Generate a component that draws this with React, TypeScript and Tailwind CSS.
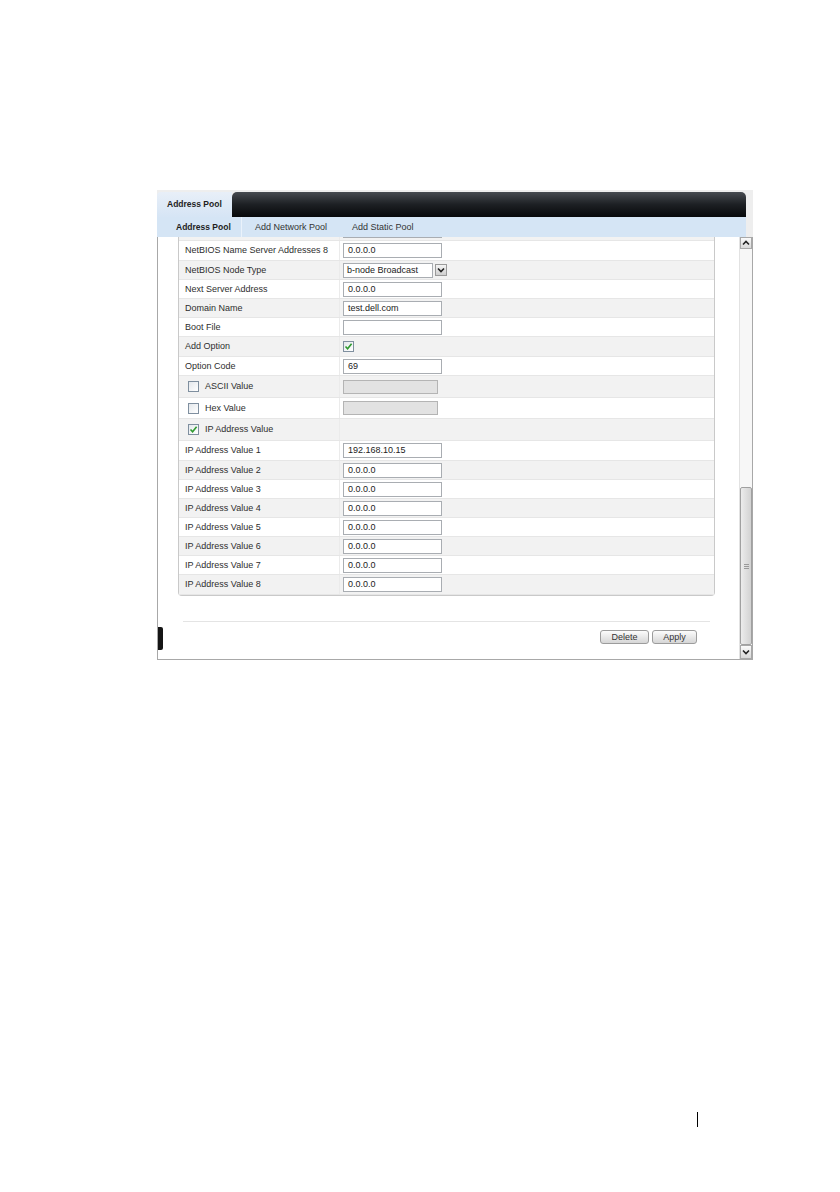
type Row = {
  label: string;
  h: string;
  kind: 'input' | 'select' | 'check' | 'checkLabel' | 'none';
  value?: string;
  checked?: boolean;
  disabledInput?: boolean;
};

// first row is scrolled almost out of view; only its input's bottom edge shows
const rows: Row[] = [
  { label: '', h: 'h-[20px]', kind: 'input', value: '' },
  { label: 'NetBIOS Name Server Addresses 8', h: 'h-[20px]', kind: 'input', value: '0.0.0.0' },
  { label: 'NetBIOS Node Type', h: 'h-[19px]', kind: 'select', value: 'b-node Broadcast' },
  { label: 'Next Server Address', h: 'h-[19px]', kind: 'input', value: '0.0.0.0' },
  { label: 'Domain Name', h: 'h-[19px]', kind: 'input', value: 'test.dell.com' },
  { label: 'Boot File', h: 'h-[19px]', kind: 'input', value: '' },
  { label: 'Add Option', h: 'h-[20px]', kind: 'check', checked: true },
  { label: 'Option Code', h: 'h-[19px]', kind: 'input', value: '69' },
  { label: 'ASCII Value', h: 'h-[22px]', kind: 'checkLabel', checked: false, disabledInput: true },
  { label: 'Hex Value', h: 'h-[21px]', kind: 'checkLabel', checked: false, disabledInput: true },
  { label: 'IP Address Value', h: 'h-[22px]', kind: 'checkLabel', checked: true },
  { label: 'IP Address Value 1', h: 'h-[20px]', kind: 'input', value: '192.168.10.15' },
  { label: 'IP Address Value 2', h: 'h-[19px]', kind: 'input', value: '0.0.0.0' },
  { label: 'IP Address Value 3', h: 'h-[19px]', kind: 'input', value: '0.0.0.0' },
  { label: 'IP Address Value 4', h: 'h-[19px]', kind: 'input', value: '0.0.0.0' },
  { label: 'IP Address Value 5', h: 'h-[19px]', kind: 'input', value: '0.0.0.0' },
  { label: 'IP Address Value 6', h: 'h-[19px]', kind: 'input', value: '0.0.0.0' },
  { label: 'IP Address Value 7', h: 'h-[19px]', kind: 'input', value: '0.0.0.0' },
  { label: 'IP Address Value 8', h: 'h-[20px]', kind: 'input', value: '0.0.0.0' },
];

function CheckBox({ checked }: { checked?: boolean }) {
  return (
    <span className="flex h-[11px] w-[11px] items-center justify-center border border-[#7f8f9f] bg-gradient-to-br from-[#e4e8ec] to-white">
      {checked && (
        <svg width="9" height="9" viewBox="0 0 9 9">
          <path d="M1.5 4.5 L3.6 6.8 L7.6 1.8" fill="none" stroke="#2f9a2f" strokeWidth="1.6" />
        </svg>
      )}
    </span>
  );
}

function Chevron({ up }: { up?: boolean }) {
  return (
    <svg width="8" height="6" viewBox="0 0 8 6">
      <path d={up ? 'M1 4.5 L4 1.5 L7 4.5' : 'M1 1.5 L4 4.5 L7 1.5'} fill="none" stroke="#222" strokeWidth="1.6" />
    </svg>
  );
}

function TextBox({ value, disabled }: { value?: string; disabled?: boolean }) {
  if (disabled) {
    return <div className="h-[14px] w-[95px] border border-[#b4b4b4] bg-[#e2e2e2]" />;
  }
  return (
    <div className="flex h-[15px] w-[99px] items-center border border-[#a9adb2] bg-white pl-[4px] text-[9px] leading-none text-[#222]">
      {value}
    </div>
  );
}

function FormRow({ row, index }: { row: Row; index: number }) {
  const shaded = index % 2 === 0;
  return (
    <div
      className={`flex ${row.h} items-center border-b border-[#e6e6e6] ${shaded ? 'bg-[#f2f2f2]' : 'bg-white'}`}
    >
      <div className="flex h-full w-[161px] items-center whitespace-nowrap border-r border-[#ebebeb] text-[9px] leading-none text-[#2e2e2e]">
        {row.kind === 'checkLabel' ? (
          <div className="flex items-center gap-[6px] pl-[9px]">
            <CheckBox checked={row.checked} />
            <span>{row.label}</span>
          </div>
        ) : (
          <span className="pl-[6px]">{row.label}</span>
        )}
      </div>
      <div className="flex items-center pl-[3px]">
        {row.kind === 'input' && <TextBox value={row.value} />}
        {row.kind === 'checkLabel' && row.disabledInput && <TextBox disabled />}
        {row.kind === 'check' && <CheckBox checked={row.checked} />}
        {row.kind === 'select' && (
          <div className="flex items-center gap-[2px]">
            <div className="flex h-[15px] w-[90px] items-center border border-[#a9adb2] bg-white pl-[3px] text-[9px] leading-none text-[#222]">
              {row.value}
            </div>
            <div className="flex h-[12px] w-[12px] items-center justify-center border border-[#9a9a9a] bg-gradient-to-b from-[#f4f4f4] to-[#cfcfcf]">
              <Chevron />
            </div>
          </div>
        )}
      </div>
    </div>
  );
}

export default function App() {
  return (
    <div
      className="h-[1192px] w-[840px] bg-white pl-[157px] pt-[190px]"
      style={{ fontFamily: '"Liberation Sans", Arial, sans-serif' }}
    >
      {/* Screenshot frame */}
      <div className="w-[596px] bg-[#eeeeee] pt-[2px]">
        {/* Header tab + dark bar */}
        <div className="mr-[7px] flex h-[25px]">
          <div className="flex w-[75px] items-center whitespace-nowrap rounded-tl-[4px] bg-gradient-to-b from-[#e8eff8] to-[#d6e5f5] pl-[10px] text-[8.5px] font-bold leading-none text-[#1e1e1e]">
            Address Pool
          </div>
          <div className="flex-1 rounded-t-[5px] bg-gradient-to-b from-[#474b51] via-[#1d2024] to-[#08090b]" />
        </div>

        {/* Sub navigation */}
        <div className="mr-[7px] flex h-[20px] items-center whitespace-nowrap bg-[#d5e5f5] text-[9px] leading-none text-[#333]">
          <div className="flex h-full w-[85px] items-center border-r border-[#eaf2fb] pl-[19px] text-[8.5px] font-bold text-[#1e1e1e]">
            Address Pool
          </div>
          <div className="flex h-full w-[97px] items-center pl-[13px]">Add Network Pool</div>
          <div className="flex h-full w-[90px] items-center pl-[13px]">Add Static Pool</div>
        </div>

        {/* Body */}
        <div className="relative flex h-[423px] border-b border-l border-r border-[#a8a8a8] bg-white">
          <div className="flex h-[422px] w-[581px] flex-col overflow-hidden">
            {/* Scrolled form table */}
            <div className="-mt-[16px] ml-[20px] w-[537px] rounded-b-[4px] border border-t-0 border-[#c9c9c9]">
              {rows.map((row, i) => (
                <FormRow key={i} row={row} index={i} />
              ))}
            </div>

            <div className="ml-[25px] mt-[25px] h-px w-[527px] bg-[#e4e4e4]" />

            <div className="mt-[8px] flex justify-end gap-[3px] pr-[42px]">
              <button className="flex h-[14px] w-[49px] items-center justify-center rounded-[3px] border border-[#9c9c9c] bg-gradient-to-b from-[#fcfcfc] to-[#d6d6d6] text-[9px] leading-none text-[#333]">
                Delete
              </button>
              <button className="flex h-[14px] w-[45px] items-center justify-center rounded-[3px] border border-[#9c9c9c] bg-gradient-to-b from-[#fcfcfc] to-[#d6d6d6] text-[9px] leading-none text-[#333]">
                Apply
              </button>
            </div>
          </div>

          {/* Vertical scrollbar */}
          <div className="flex h-[422px] w-[13px] flex-col border-l border-[#e2e2e2]">
            <div className="flex h-[12px] items-center justify-center border border-[#a8a8a8] bg-gradient-to-b from-[#fafafa] to-[#d8d8d8]">
              <Chevron up />
            </div>
            <div className="flex-1 bg-[#f7f7f7]" />
            <div className="flex h-[158px] items-center justify-center rounded-[2px] border border-[#a0a0a0] bg-gradient-to-r from-[#ececec] to-[#d2d2d2]">
              <div className="flex flex-col gap-[1px]">
                <span className="h-px w-[5px] bg-[#9a9a9a]" />
                <span className="h-px w-[5px] bg-[#9a9a9a]" />
                <span className="h-px w-[5px] bg-[#9a9a9a]" />
              </div>
            </div>
            <div className="flex h-[14px] items-center justify-center border border-[#a8a8a8] bg-gradient-to-b from-[#fafafa] to-[#d8d8d8]">
              <Chevron />
            </div>
          </div>

          {/* Collapse handle */}
          <div className="absolute left-0 top-[390px] h-[23px] w-[5px] rounded-r-[2px] bg-[#151515]" />
        </div>
      </div>

      {/* Page footer marker */}
      <div className="ml-[540px] mt-[452px] h-[15px] w-px bg-black" />
    </div>
  );
}
